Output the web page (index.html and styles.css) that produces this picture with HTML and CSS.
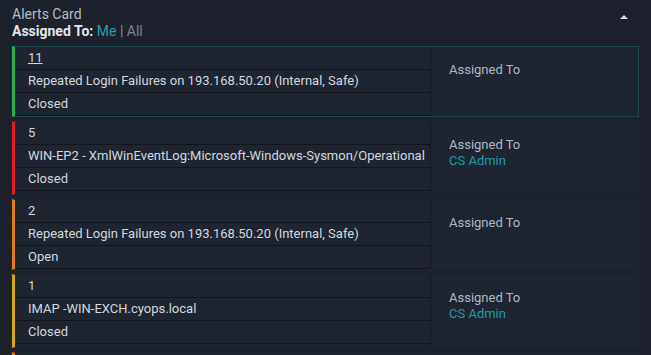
FILE: index.html
```html
<!DOCTYPE html>
<html>
<head>
<meta charset="utf-8">
<link rel="stylesheet" href="styles.css">
</head>
<body>
<div class="widget">
  <div class="header">
    <div class="titles">
      <div class="title">Alerts Card</div>
      <div class="filter"><span class="filter-label">Assigned To:</span> <span class="opt active">Me</span> <span class="sep">|</span> <span class="opt">All</span></div>
    </div>
    <span class="caret"></span>
  </div>
  <div class="list">
    <div class="card selected green">
      <div class="left">
        <div class="row"><span class="id">11</span></div>
        <div class="row">Repeated Login Failures on 193.168.50.20 (Internal, Safe)</div>
        <div class="row">Closed</div>
      </div>
      <div class="right">
        <div class="label">Assigned To</div>
      </div>
    </div>
    <div class="card red">
      <div class="left">
        <div class="row">5</div>
        <div class="row">WIN-EP2 - XmlWinEventLog:Microsoft-Windows-Sysmon/Operational</div>
        <div class="row">Closed</div>
      </div>
      <div class="right">
        <div class="label">Assigned To</div>
        <div class="user">CS Admin</div>
      </div>
    </div>
    <div class="card orange">
      <div class="left">
        <div class="row">2</div>
        <div class="row">Repeated Login Failures on 193.168.50.20 (Internal, Safe)</div>
        <div class="row">Open</div>
      </div>
      <div class="right">
        <div class="label">Assigned To</div>
      </div>
    </div>
    <div class="card yellow">
      <div class="left">
        <div class="row">1</div>
        <div class="row">IMAP -WIN-EXCH.cyops.local</div>
        <div class="row">Closed</div>
      </div>
      <div class="right">
        <div class="label">Assigned To</div>
        <div class="user">CS Admin</div>
      </div>
    </div>
    <div class="card orange stub"></div>
  </div>
</div>
</body>
</html>
```
FILE: styles.css
```css
html, body {
  margin: 0;
  padding: 0;
  background: #1c212b;
  height: 100%;
  overflow: hidden;
}
body {
  font-family: Roboto, "Liberation Sans", sans-serif;
  font-size: 13px;
  color: #d3d8de;
}
.widget {
  padding: 6px 12px 0 12px;
}
.header {
  display: flex;
  justify-content: space-between;
  align-items: flex-start;
}
.title {
  font-size: 14px;
  line-height: 17px;
  color: #b4bcc7;
}
.filter {
  font-size: 14px;
  line-height: 17px;
  color: #e2e6ea;
}
.filter-label {
  font-weight: bold;
}
.opt {
  color: #7d838b;
}
.opt.active {
  color: #1fa2a9;
}
.sep {
  color: #8a9098;
}
.caret {
  width: 0;
  height: 0;
  border-left: 4px solid transparent;
  border-right: 4px solid transparent;
  border-bottom: 4px solid #d6dde4;
  margin: 9px 11px 0 0;
}
.list {
  margin-top: 6px;
  display: flex;
  flex-direction: column;
  gap: 4px;
}
.card {
  display: flex;
  background: #1e2430;
  border: 1px solid transparent;
  border-left: 3px solid #2aa84a;
  align-items: stretch;
}
.card.selected {
  border-color: #1e4b50;
}
.card.green { border-left-color: #27b24f; }
.card.red { border-left-color: #e0201f; }
.card.orange { border-left-color: #e47b12; }
.card.yellow { border-left-color: #d9a514; }
.card.stub { height: 40px; }
.left {
  width: 415px;
  flex: none;
  border-right: 1px solid #141820;
}
.row {
  height: 22px;
  line-height: 22px;
  border-bottom: 1px solid #12161c;
  padding-left: 13px;
  white-space: nowrap;
  overflow: hidden;
}
.id {
  text-decoration: underline;
}
.right {
  flex: 1;
  padding: 15px 18px 25px 18px;
  line-height: 16px;
}
.label {
  color: #b1b9c4;
}
.user {
  color: #1c9fa7;
}
```
